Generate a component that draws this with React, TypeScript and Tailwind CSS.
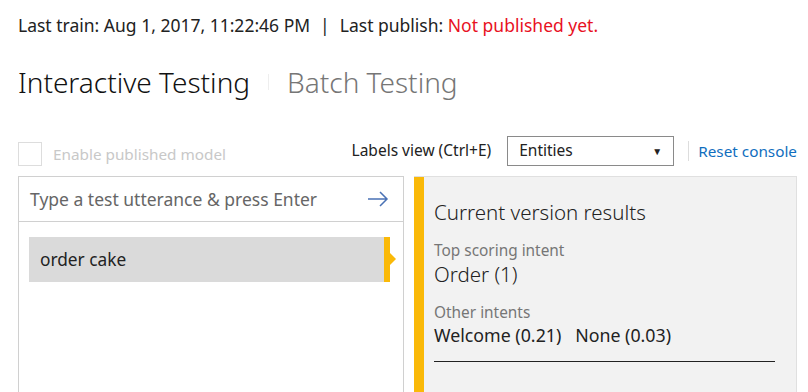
import React from "react";

export default function App() {
  const font = { fontFamily: '"Segoe UI", "Noto Sans", "Open Sans", sans-serif' };
  return (
    <div className="w-[808px] h-[392px] overflow-hidden bg-white text-[#212121] relative" style={font}>
      <div className="pl-[18px] pt-[13px] flex items-center text-[17.5px] leading-[24px] text-[#222]">
        <span>Last train: Aug 1, 2017, 11:22:46 PM</span>
        <span className="mx-[10px]">|</span>
        <span>Last publish:&nbsp;</span>
        <span className="text-[#e81123]">Not published yet.</span>
      </div>

      <div className="pl-[18px] mt-[25px] flex items-center h-[40px]">
        <span className="text-[28px] font-light text-[#111]">Interactive Testing</span>
        <span className="w-px h-[16px] bg-[#eee] mx-[18px]" />
        <span className="text-[28px] font-light text-[#767676]">Batch Testing</span>
      </div>

      <div className="pl-[18px] pr-[11px] mt-[34px] flex items-center h-[30px]">
        <div className="self-end flex items-center h-[24px]">
          <span className="w-[24px] h-[24px] border border-[#ddd]" />
          <span className="ml-[11px] text-[15.3px] text-[#c8c8c8]">Enable published model</span>
        </div>
        <span className="ml-auto text-[15.5px] text-[#222]">Labels view (Ctrl+E)</span>
        <div className="ml-[16px] w-[167px] h-[30px] border border-[#8a8a8a] flex items-center pl-[11px] pr-[11px] text-[15.5px] text-[#222]">
          <span>Entities</span>
          <span className="ml-auto text-[10px]">▼</span>
        </div>
        <span className="ml-[14px] w-px h-[20px] bg-[#ddd]" />
        <span className="ml-[9px] text-[15.3px] text-[#106ebe]">Reset console</span>
      </div>

      <div className="pl-[18px] pr-[11px] mt-[10px] flex gap-[10px] h-[220px]">
        <div className="w-[386px] border border-[#d0d0d0] border-b-0 flex flex-col">
          <div className="h-[45px] border-b border-[#d0d0d0] flex items-center pl-[11px] pr-[14px]">
            <span className="text-[17.5px] text-[#666]">Type a test utterance &amp; press Enter</span>
            <svg className="ml-auto" width="22" height="16" viewBox="0 0 22 16" fill="none" stroke="#4a72b5" strokeWidth="1.5">
              <path d="M1 8h19M13 1l7 7-7 7" />
            </svg>
          </div>
          <div className="mt-[15px] ml-[10px] w-[361px] h-[45px] bg-[#dadada] flex items-center relative">
            <span className="pl-[11px] text-[17.3px] text-[#222]">order cake</span>
            <div className="absolute right-0 top-0 w-[6px] h-full bg-[#fab908]" />
            <div className="absolute right-[-6px] top-[16px] w-0 h-0 border-y-[6px] border-y-transparent border-l-[6px] border-l-[#fab908]" />
          </div>
        </div>
        <div className="flex-1 bg-[#f2f2f2] border-r border-t border-[#e0e0e0] flex">
          <div className="w-[10px] bg-[#fab908]" />
          <div className="pl-[10px] pr-[21px] flex-1 flex flex-col">
            <div className="mt-[21px] text-[20.5px] font-light leading-[28px] text-[#222]">Current version results</div>
            <div className="mt-[15px] text-[15.4px] leading-[20px] text-[#767676]">Top scoring intent</div>
            <div className="text-[20.5px] font-light leading-[26px] text-[#222]">Order (1)</div>
            <div className="mt-[16px] text-[15.4px] leading-[20px] text-[#767676]">Other intents</div>
            <div className="text-[17.8px] leading-[24px] text-[#222]">Welcome (0.21)&nbsp;&nbsp; None (0.03)</div>
            <div className="mt-[14px] h-px bg-[#222]" />
          </div>
        </div>
      </div>
    </div>
  );
}
